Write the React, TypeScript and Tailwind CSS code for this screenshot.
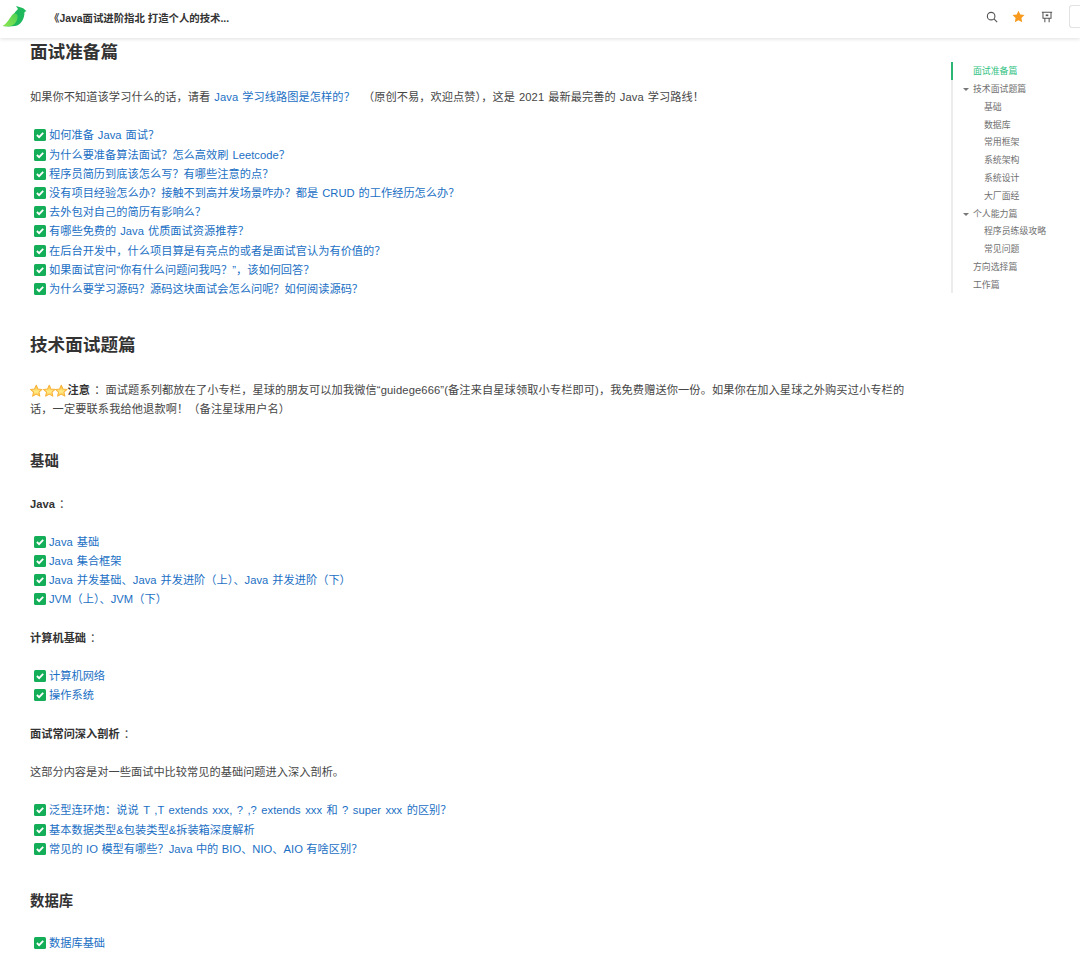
import React from "react";

const Check = () => (
  <svg viewBox="0 0 12 12" className="w-[12px] h-[12px] shrink-0 mr-[3px] ml-[4px] mb-[1px]">
    <rect x="0" y="0" width="12" height="12" rx="1.5" fill="#14ad58" />
    <path d="M2.9 6 L5.1 8.2 L9.2 3.9" fill="none" stroke="#fff" strokeWidth="1.8" />
  </svg>
);

const Li = ({ children, spacing }: { children: React.ReactNode; spacing?: string }) => (
  <div className="flex items-center h-[19.2px] text-[#1a6fc4]">
    <Check />
    <span className={spacing}>{children}</span>
  </div>
);

const A = ({ children }: { children: React.ReactNode }) => <span className="text-[#1a6fc4]">{children}</span>;

const Star = () => (
  <svg viewBox="0 0 24 24" className="w-[12.5px] h-[13.5px] inline-block align-[-3px]">
    <defs>
      <linearGradient id="sg" x1="0" y1="0" x2="0" y2="1">
        <stop offset="0" stopColor="#ffc23c" />
        <stop offset="0.6" stopColor="#ffec8a" />
        <stop offset="1" stopColor="#ffc23c" />
      </linearGradient>
    </defs>
    <path d="M12 1.5 L15.2 8.6 L23 9.4 L17.2 14.6 L18.9 22.4 L12 18.4 L5.1 22.4 L6.8 14.6 L1 9.4 L8.8 8.6 Z" fill="url(#sg)" stroke="#f9b23a" strokeWidth="2" strokeLinejoin="round" />
  </svg>
);

const toc: [string, number, string?][] = [
  ["面试准备篇", 0, "active"],
  ["技术面试题篇", 0, "caret"],
  ["基础", 1],
  ["数据库", 1],
  ["常用框架", 1],
  ["系统架构", 1],
  ["系统设计", 1],
  ["大厂面经", 1],
  ["个人能力篇", 0, "caret"],
  ["程序员练级攻略", 1],
  ["常见问题", 1],
  ["方向选择篇", 0],
  ["工作篇", 0],
];

export default function App() {
  return (
    <div
      className="w-[1080px] h-[955px] overflow-hidden bg-white flex flex-col text-[11.2px] leading-[19.2px] text-[#464646] tracking-[0.03px] [word-spacing:0.8px]"
      style={{ fontFamily: '"Liberation Sans", "Noto Sans CJK SC", sans-serif' }}
    >
      <header className="h-[38px] shrink-0 flex items-center bg-white shadow-[0_1px_4px_rgba(0,0,0,0.13)] z-10 relative">
        <svg viewBox="0 0 26 26" className="w-[26px] h-[26px] ml-[1px] mb-[4px]">
          <defs>
            <linearGradient id="g" x1="0" y1="1" x2="1" y2="0">
              <stop offset="0" stopColor="#8de650" />
              <stop offset="1" stopColor="#4fd155" />
            </linearGradient>
          </defs>
          <path d="M15 2 L20 3.6 C22 4 23.5 5 24 6 L25.5 7 L23.5 8 C23.5 15 20 21 14 22 C10 22.5 6 22.5 2 22 C6 20 9 16 12 11 C14 8 16 6 17 5 Z" fill="#1fb85c" />
          <path d="M2 22 C6 19 9 14 11.5 10.5 C13 8.5 16 9.5 16.5 11.5 C17 15 15 20 11 21.5 C8 22.5 5 22.5 2 22 Z" fill="url(#g)" />
        </svg>
        <div className="ml-[22px] text-[10.4px] font-bold text-[#333] tracking-normal [word-spacing:0]">《Java面试进阶指北 打造个人的技术...</div>
        <div className="ml-auto flex items-center mb-[5px]">
          <svg viewBox="0 0 14 14" className="w-[12px] h-[12px] mr-[14px]" fill="none" stroke="#555" strokeWidth="1.3">
            <circle cx="6" cy="6" r="4.4" />
            <path d="M9.3 9.3 L13 13" />
          </svg>
          <svg viewBox="0 0 24 24" className="w-[13px] h-[13px] mr-[16px]" fill="#f79a1e">
            <path d="M12 1.5 L15.3 8.4 L23 9.4 L17.4 14.7 L18.8 22.4 L12 18.7 L5.2 22.4 L6.6 14.7 L1 9.4 L8.7 8.4 Z" />
          </svg>
          <svg viewBox="0 0 14 14" className="w-[12px] h-[12px] mr-[16px]" fill="none" stroke="#555" strokeWidth="1.2">
            <path d="M1 1.5 H13 M2.3 1.5 V8.5 H11.7 V1.5 M4.5 8.5 V13 M9.5 8.5 V13" />
            <rect x="5.5" y="4" width="3" height="2" fill="#555" stroke="none" />
          </svg>
          <div className="w-[11px] h-[23px] border border-r-0 border-[#e2e2e2] rounded-l-[3px]" />
        </div>
      </header>

      <div className="flex-1 flex min-h-0">
        <main className="w-[878px] ml-[30px] shrink-0">
          <h1 className="text-[17.6px] leading-[26px] font-bold text-[#333] mt-[1px] mb-[23px]">面试准备篇</h1>
          <p className="mb-[19.2px] whitespace-pre tracking-[0.08px]">
            如果你不知道该学习什么的话，请看 <A>Java 学习线路图是怎样的？</A>  （原创不易，欢迎点赞），这是 2021 最新最完善的 Java 学习路线！
          </p>
          <div className="mb-[33px]">
            <Li>如何准备 Java 面试？</Li>
            <Li>为什么要准备算法面试？怎么高效刷 Leetcode？</Li>
            <Li>程序员简历到底该怎么写？有哪些注意的点？</Li>
            <Li>没有项目经验怎么办？接触不到高并发场景咋办？都是 CRUD 的工作经历怎么办？</Li>
            <Li>去外包对自己的简历有影响么？</Li>
            <Li>有哪些免费的 Java 优质面试资源推荐？</Li>
            <Li>在后台开发中，什么项目算是有亮点的或者是面试官认为有价值的？</Li>
            <Li>如果面试官问“你有什么问题问我吗？”，该如何回答？</Li>
            <Li>为什么要学习源码？源码这块面试会怎么问呢？如何阅读源码？</Li>
          </div>
          <h1 className="text-[17.6px] leading-[26px] font-bold text-[#333] mb-[23px]">技术面试题篇</h1>
          <p className="mb-[31px] tracking-[0.12px]">
            <Star /><Star /><Star /><b className="text-[#333]">注意</b> ：面试题系列都放在了小专栏，星球的朋友可以加我微信“guidege666”(备注来自星球领取小专栏即可)，我免费赠送你一份。如果你在加入星球之外购买过小专栏的话，一定要联系我给他退款啊！（备注星球用户名）
          </p>
          <h2 className="text-[14.4px] leading-[22px] font-bold text-[#333] mb-[22.5px]">基础</h2>
          <p className="mb-[18.5px]"><b className="text-[#333]">Java</b> ：</p>
          <div className="mb-[19.2px]">
            <Li>Java 基础</Li>
            <Li>Java 集合框架</Li>
            <Li>Java 并发基础、Java 并发进阶（上）、Java 并发进阶（下）</Li>
            <Li>JVM（上）、JVM（下）</Li>
          </div>
          <p className="mb-[19.2px]"><b className="text-[#333]">计算机基础</b> ：</p>
          <div className="mb-[19.2px]">
            <Li>计算机网络</Li>
            <Li>操作系统</Li>
          </div>
          <p className="mb-[19.2px]"><b className="text-[#333]">面试常问深入剖析</b> ：</p>
          <p className="mb-[19.2px]">这部分内容是对一些面试中比较常见的基础问题进入深入剖析。</p>
          <div className="mb-[31px]">
            <Li spacing="[word-spacing:1.3px]">泛型连环炮：说说 T ,T extends xxx, ? ,? extends xxx 和 ? super xxx 的区别？</Li>
            <Li>基本数据类型&amp;包装类型&amp;拆装箱深度解析</Li>
            <Li spacing="[word-spacing:0.3px]">常见的 IO 模型有哪些？Java 中的 BIO、NIO、AIO 有啥区别？</Li>
          </div>
          <h2 className="text-[14.4px] leading-[22px] font-bold text-[#333] mb-[22px]">数据库</h2>
          <Li>数据库基础</Li>
        </main>

        <aside className="w-[128px] ml-[43px] mt-[24px] h-[231px] border-l-2 border-[#ececec] relative text-[8.9px] leading-[17.8px] text-[#707070] tracking-normal [word-spacing:0]">
          <div className="absolute -left-[2px] top-0 w-[2px] h-[18px] bg-[#2bb673]" />
          {toc.map(([t, lvl, kind]) => (
            <div key={t} className={`flex items-center h-[17.8px] pt-[2.5px] ${lvl ? "pl-[31px]" : "pl-[20px]"} ${kind === "active" ? "text-[#2fc27f]" : ""}`}>
              {kind === "caret" && <span className="w-0 h-0 -ml-[10px] mr-[4px] border-x-[3px] border-x-transparent border-t-[3px] border-t-[#777]" />}
              {t}
            </div>
          ))}
        </aside>
      </div>
    </div>
  );
}
